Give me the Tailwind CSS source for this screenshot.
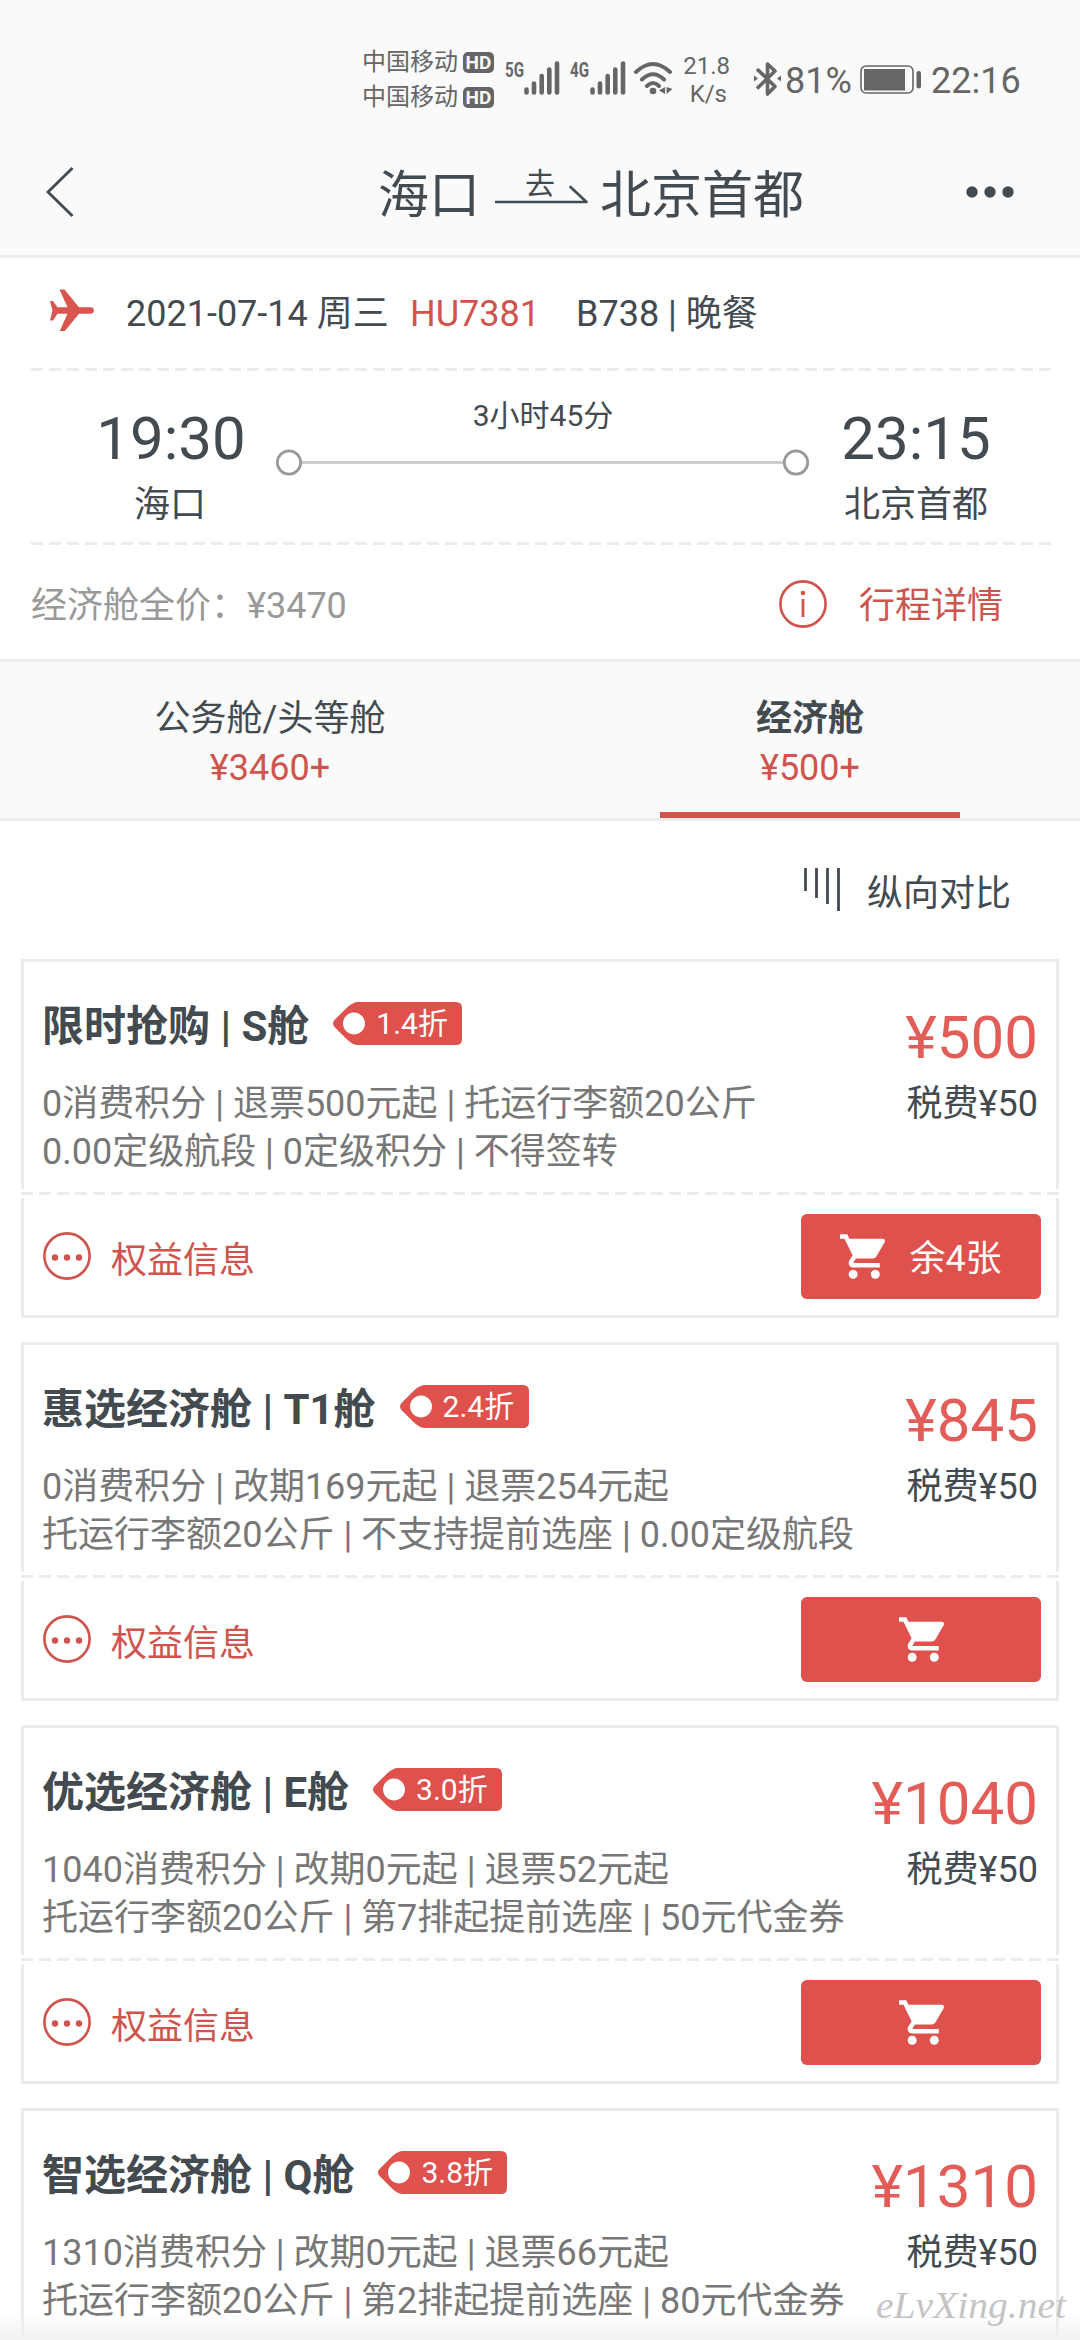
<!DOCTYPE html>
<html lang="zh-CN">
<head>
<meta charset="utf-8">
<title>航班舱位</title>
<script src="https://cdn.jsdelivr.net/npm/@tailwindcss/browser@4"></script>
</head>
<body class="bg-white">
<svg class="hidden">
  <symbol id="cart" viewBox="48 51 416 410"><path fill="currentColor" d="M169.600 377.600c-22.882 0-41.600 18.718-41.600 41.601 0 22.882 18.718 41.600 41.600 41.600s41.601-18.718 41.601-41.600c-.001-22.884-18.720-41.601-41.601-41.601zM48 51.200v41.600h41.600l74.883 151.682-31.308 50.954c-3.118 5.200-5.200 12.482-5.200 19.765 0 27.850 19.025 41.600 44.825 41.600H416v-40H177.893c-3.118 0-5.200-2.082-5.200-5.200 0-1.036 2.207-5.200 2.207-5.200l20.782-32.800h154.954c15.601 0 29.128-8.317 36.400-21.836l74.882-128.800c1.237-2.461 2.082-6.246 2.082-10.400 0-11.446-9.364-19.765-20.800-19.765H135.364L115.600 51.200H48zm326.399 326.400c-22.882 0-41.600 18.718-41.600 41.601 0 22.882 18.718 41.600 41.600 41.600S416 442.082 416 419.200c0-22.883-18.719-41.600-41.601-41.600z"/></symbol>
  <symbol id="more" viewBox="0 0 48 48"><circle cx="24" cy="24" r="22.600" fill="none" stroke="currentColor" stroke-width="2.600"/><g fill="currentColor"><circle cx="12" cy="25.500" r="3.200"/><circle cx="24" cy="25.500" r="3.200"/><circle cx="36" cy="25.500" r="3.200"/></g></symbol>
  <symbol id="tag" viewBox="0 0 129 43"><path fill="#df514c" fill-rule="evenodd" d="M1.500 18 14 5.500Q20 0 25 0H123Q129 0 129 6V37Q129 43 123 43H25Q20 43 14 37.500L1.500 25Q-1.500 21.500 1.500 18ZM21 10.500a11 11 0 1 0 .01 0Z"/></symbol>
  <symbol id="dash" viewBox="0 0 1038 3"><path d="M0 1.500H1038" stroke="#ececec" stroke-width="3" stroke-dasharray="12 6"/></symbol>
  <symbol id="bars" viewBox="0 0 36 34"><path d="M2.500 28.500V31.500M10 22.500V31.500M17.700 15V31.500M25.300 8.500V31.500M33 2.500V31.500" stroke="#666" stroke-width="4.600" stroke-linecap="round"/></symbol>
</svg>
<div class="w-[1080px] h-[2340px] overflow-hidden relative flex flex-col bg-white text-[#434a50] text-[36px] leading-[48px] font-['Roboto','Noto_Sans_CJK_SC',sans-serif] whitespace-nowrap">

  <!-- status bar and title bar -->
  <header class="h-[258px] shrink-0 bg-[#fafafa] border-b-3 border-[#ececec]">
    <div class="h-[128px] pt-[34px] pl-[362px] flex text-[#666]">
      <div class="flex flex-col pt-[11px] text-[24px] leading-[35px] w-[101px]"><span>中国移动</span><span>中国移动</span></div>
      <div class="flex flex-col gap-[14px] pt-[18px] w-[43px] text-[19px] leading-[21px] font-bold text-[#fafafa]">
        <span class="w-[31px] h-[21px] rounded-[5px] bg-[#666] text-center">HD</span>
        <span class="w-[31px] h-[21px] rounded-[5px] bg-[#666] text-center">HD</span>
      </div>
      <div class="flex w-[65px] pt-[27px]"><svg class="w-[18px] h-[18px] overflow-visible"><text x="-1" y="15.500" font-size="21" font-weight="700" textLength="19" lengthAdjust="spacingAndGlyphs" fill="#666">5G</text></svg><svg class="w-[36px] h-[34px]"><use href="#bars"/></svg></div>
      <div class="flex w-[62px] pt-[27px]"><svg class="w-[18px] h-[18px] overflow-visible"><text x="-1" y="15.500" font-size="21" font-weight="700" textLength="19" lengthAdjust="spacingAndGlyphs" fill="#666">4G</text></svg><svg class="w-[36px] h-[34px] ml-px"><use href="#bars"/></svg></div>
      <svg class="w-[40px] h-[34px] mt-[27px]" viewBox="0 0 40 34" fill="none" stroke="#666" stroke-width="4" stroke-linecap="round"><path d="M3 11Q20-5 37 11M9 18.500Q20 8 31 18.500M14 25Q20 19 26 25"/><circle cx="20" cy="30" r="3.300" fill="#666" stroke="none"/><path d="M32 26v7l-6-3.500zM33.500 26v7l6-5z" fill="#666" stroke="none"/></svg>
      <div class="w-[57px] pt-[18px] text-[24px] leading-[28px] text-right"><p>21.8</p><p class="pr-[3px]">K/s</p></div>
      <svg class="w-[27px] h-[36px] ml-[24px] mt-[27px]" viewBox="0 0 27 36" fill="none" stroke="#666" stroke-width="3.600" stroke-linejoin="round"><path d="M3 8 21 25.500 13.500 33V3L21 10 3 27.500"/><path d="M0 14.500v6l4-3zM27 14.500v6l-4-3z" fill="#666" stroke="none"/></svg>
      <div class="pt-[23px] w-[76px] pl-[4px] -mr-px">81%</div>
      <svg class="w-[62px] h-[30px] ml-[4px] mt-[31px]" viewBox="0 0 62 30"><rect x="1" y="1" width="52" height="27" rx="5" fill="none" stroke="#666" stroke-width="1.600"/><rect x="4" y="4" width="41" height="21.500" fill="#666"/><rect x="56.500" y="6" width="4.500" height="17.500" rx="2.200" fill="#666"/></svg>
      <div class="pt-[23px] pl-[9px]">22:16</div>
    </div>
    <div class="h-[127px] flex text-[51px] leading-[72px]">
      <svg class="w-[28px] h-[50px] ml-[46px] mt-[39px]" viewBox="0 0 28 50"><path d="M26.500 1 2 25 26.500 49" fill="none" stroke="#434a50" stroke-width="2.800"/></svg>
      <div class="pl-[304px] pt-[32px] w-[421px]">海口</div>
      <div class="w-[105px]">
        <p class="pl-[30px] pt-[36px] text-[30px] leading-[40px] h-[57px]">去</p>
        <svg class="w-[93px] h-[20px]" viewBox="0 0 93 20"><path d="M1 17H91.500L75.500 2" fill="none" stroke="#434a50" stroke-width="2.600" stroke-linecap="round" stroke-linejoin="round"/></svg>
      </div>
      <div class="pt-[32px] w-[366px]">北京首都</div>
      <svg class="w-[48px] h-[12px] mt-[58px]" viewBox="0 0 48 12" fill="#434a50"><circle cx="6" cy="6" r="5.700"/><circle cx="24" cy="6" r="5.700"/><circle cx="42" cy="6" r="5.700"/></svg>
    </div>
  </header>

  <!-- flight summary -->
  <section class="h-[110px] shrink-0 pl-[50px] pt-[31px] flex">
    <svg class="w-[44px] h-[42px]" viewBox="0 0 44 42" fill="#d95550"><path d="M9.500.5h5L29 18.200H40.500a3.300 3.300 0 0 1 0 6.600H29L14.500 42.500h-5L17.500 24.800H7.500L3 31.500H0L2.500 21.500 0 12H3L7.500 18.200H17.500Z"/></svg>
    <p class="pt-px ml-[32px] w-[284px]">2021-07-14 周三</p>
    <p class="pt-px w-[166px] text-[#cf544e]">HU7381</p>
    <p class="pt-px">B738 | 晚餐</p>
  </section>
  <section class="mx-[31px] h-[177px] shrink-0 flex flex-col">
    <svg class="w-[1021px] h-[3px] shrink-0" viewBox="0 0 1021 3"><path d="M0 1.500H1021" stroke="#ececec" stroke-width="3" stroke-dasharray="12 6"/></svg>
    <div class="flex">
      <div class="w-[245px] pl-[33px] pt-[32px] text-center">
        <p class="w-[214px] text-[60px] leading-[72px]">19:30</p>
        <p class="w-[212px] pt-[6px]">海口</p>
      </div>
      <div class="w-[534px] pt-[25px]">
        <p class="text-center text-[30px] leading-[40px]">3小时45分</p>
        <svg class="w-[534px] h-[27px] mt-[13px]" viewBox="0 0 534 27" fill="none"><path d="M26 13.500H508" stroke="#ccc" stroke-width="3"/><circle cx="13" cy="13.500" r="11.700" stroke="#999" stroke-width="2.800"/><circle cx="520" cy="13.500" r="11.700" stroke="#999" stroke-width="2.800"/></svg>
      </div>
      <div class="pt-[32px] w-[212px] text-center">
        <p class="text-[60px] leading-[72px]">23:15</p>
        <p class="pt-[6px]">北京首都</p>
      </div>
    </div>
  </section>
  <section class="h-[120px] shrink-0 border-b-3 border-[#ececec] pl-[31px] flex flex-col -mt-[3px]">
    <svg class="w-[1021px] h-[3px] shrink-0" viewBox="0 0 1021 3"><path d="M0 1.500H1021" stroke="#ececec" stroke-width="3" stroke-dasharray="12 6"/></svg>
    <div class="flex pt-[35px]">
      <p class="w-[748px] pt-[2px] text-[#999]">经济舱全价：¥3470</p>
      <svg class="w-[48px] h-[48px] text-[#cf544e]" viewBox="0 0 48 48"><circle cx="24" cy="24" r="22.600" fill="none" stroke="currentColor" stroke-width="2.600"/><path d="M24 19V37" stroke="currentColor" stroke-width="2.800"/><circle cx="24" cy="13" r="2.300" fill="currentColor"/></svg>
      <p class="pl-[32px] pt-[2px] text-[#cf544e]">行程详情</p>
    </div>
  </section>

  <!-- cabin tabs -->
  <nav class="h-[159px] shrink-0 bg-[#fafafa] border-b-3 border-[#ececec] flex text-center">
    <div class="w-[540px] pt-[33px]"><p class="leading-[49px]">公务舱/头等舱</p><p class="leading-[49px] text-[#cf544e]">¥3460+</p></div>
    <div class="w-[540px] pt-[33px]"><p class="leading-[49px] font-bold">经济舱</p><p class="leading-[49px] text-[#cf544e]">¥500+</p><div class="w-[300px] h-[6px] mx-auto mt-[19px] bg-[#cf544e]"></div></div>
  </nav>
  <div class="h-[138px] shrink-0 pl-[803px] pt-[47px] flex">
    <svg class="w-[38px] h-[43px]" viewBox="0 0 38 43"><path d="M2.500 0V23M13.500 0V30M24.500 0V36M35.500 0V43" stroke="#434a50" stroke-width="2.800"/></svg>
    <p class="pl-[26px] pt-[2px]">纵向对比</p>
  </div>

  <!-- fares -->
  <main id="fares" class="mx-[21px] flex flex-col gap-[24px]"></main>

  <div class="absolute bottom-0 left-0 w-full h-[26px] bg-linear-to-b from-[#f2f2f2]/0 to-[#f2f2f2]"></div>
  <svg class="absolute left-[870px] top-[2280px] w-[206px] h-[60px]"><text x="6" y="38" font-size="38" font-style="italic" font-family="'Z003','URW Chancery L',cursive" textLength="190" lengthAdjust="spacingAndGlyphs" fill="#c4c4c4">eLvXing.net</text></svg>
</div>

<template id="fare">
  <article class="h-[359px] shrink-0 border-3 border-[#ececec] relative">
    <div class="h-[233px] pl-[18px] pr-[18px] pt-[40px] flex justify-between">
      <div class="flex flex-col">
        <div class="flex items-start gap-[24px]">
          <h2 data-f="name" class="pt-px text-[42px] leading-[48px] font-bold"></h2>
          <div class="relative w-[129px] h-[43px]">
            <svg class="w-[129px] h-[43px]"><use href="#tag"/></svg>
            <span data-f="off" class="absolute left-[43px] top-0 text-[30px] leading-[43px] text-white"></span>
          </div>
        </div>
        <p data-f="l1" class="pt-[29px] text-[#777]"></p>
        <p data-f="l2" class="text-[#777]"></p>
      </div>
      <div class="text-right flex flex-col">
        <p data-f="price" class="text-[60px] leading-[72px] text-[#e25d58]"></p>
        <p class="pt-[6px]">税费¥50</p>
      </div>
    </div>
    <div data-f="foot" class="h-[120px] -mt-[3px] pl-[19px] pr-[15px] flex">
      <svg class="w-[48px] h-[48px] mt-[40px] text-[#cf544e]"><use href="#more"/></svg>
      <p class="pl-[20px] pt-[45px] text-[#cf544e]">权益信息</p>
      <div class="ml-auto mt-[22px] w-[240px] h-[85px] rounded-[6px] bg-[#df514c] text-white flex items-center justify-center gap-[24px]">
        <svg class="w-[45px] h-[45px]"><use href="#cart"/></svg>
        <span data-f="left" class="pt-[5px]"></span>
      </div>
    </div>
    <div class="absolute -left-[3px] top-[227px] w-[1038px] h-[9px] bg-white flex items-center"><svg class="w-[1038px] h-[3px]"><use href="#dash"/></svg></div>
  </article>
</template>
<script>
const fares = [
  {name: '限时抢购 | S舱', off: '1.4折', l1: '0消费积分 | 退票500元起 | 托运行李额20公斤', l2: '0.00定级航段 | 0定级积分 | 不得签转', price: '¥500', left: '余4张', foot: true},
  {name: '惠选经济舱 | T1舱', off: '2.4折', l1: '0消费积分 | 改期169元起 | 退票254元起', l2: '托运行李额20公斤 | 不支持提前选座 | 0.00定级航段', price: '¥845', foot: true},
  {name: '优选经济舱 | E舱', off: '3.0折', l1: '1040消费积分 | 改期0元起 | 退票52元起', l2: '托运行李额20公斤 | 第7排起提前选座 | 50元代金券', price: '¥1040', foot: true},
  {name: '智选经济舱 | Q舱', off: '3.8折', l1: '1310消费积分 | 改期0元起 | 退票66元起', l2: '托运行李额20公斤 | 第2排起提前选座 | 80元代金券', price: '¥1310'}
];
const list = document.getElementById('fares');
for (const f of fares) {
  const card = document.getElementById('fare').content.cloneNode(true);
  card.querySelectorAll('[data-f]').forEach(el => {
    const v = f[el.dataset.f];
    if (!v) el.remove();
    else if (v !== true) el.textContent = v;
  });
  list.append(card);
}
</script>
</body>
</html>
